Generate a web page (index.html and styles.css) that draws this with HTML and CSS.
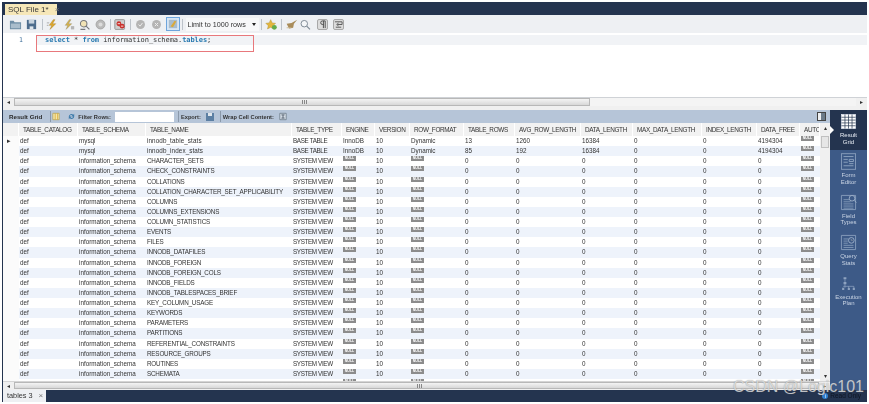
FILE: index.html
```html
<!DOCTYPE html>
<html lang="en">
<head>
<meta charset="utf-8">
<title>SQL File 1</title>
<link rel="stylesheet" href="styles.css">
</head>
<body>
<div class="app">
  <div class="tabbar"><div class="tab">SQL File 1* <span class="close">×</span></div></div>
  <div class="toolbar">
    <svg class="ic" viewBox="0 0 14 14"><path d="M1 3h4l1 1.500h7V12H1z" fill="#6f8ea6"/><path d="M2 6h10v5H2z" fill="#a9bdcc"/></svg>
    <svg class="ic" viewBox="0 0 14 14"><path d="M2 2h10v10H2z" fill="#4d6c8c"/><path d="M4 2h6v4H4z" fill="#c7d3de"/><path d="M5 9h4v3H5z" fill="#dfe6ec"/></svg>
    <i class="sep first"></i>
    <svg class="ic" viewBox="0 0 16 14"><path d="M9 1 4 8h3l-2 5 7-7H8l3-5z" fill="#e0a92c" stroke="#9c7a2a" stroke-width=".5"/><path d="M1 5h3M1 8h2" stroke="#888" stroke-width=".8"/></svg>
    <svg class="ic" viewBox="0 0 16 14"><path d="M9 1 4 8h3l-2 5 7-7H8l3-5z" fill="#d6b24c" stroke="#8f8a70" stroke-width=".5"/><path d="M11 9h4v4h-4z" fill="#b5b5b5"/></svg>
    <svg class="ic" viewBox="0 0 16 14"><circle cx="7" cy="6" r="4" fill="#f1e3b5" stroke="#77797c" stroke-width="1.300"/><path d="m10 9 4 4M3 13h6" stroke="#77797c" stroke-width="1.500"/></svg>
    <svg class="ic" viewBox="0 0 16 14"><circle cx="8" cy="7" r="5.500" fill="#b9b9b9" stroke="#a0a0a0"/><circle cx="8" cy="7" r="2.500" fill="#dcdcdc"/></svg>
    <i class="sep"></i>
    <svg class="ic" viewBox="0 0 16 14"><rect x="1" y="1" width="12" height="12" rx="1" fill="#cfcfcf" stroke="#888"/><circle cx="6" cy="6" r="3" fill="#c9302c"/><circle cx="10" cy="9" r="3" fill="#c9302c"/><path d="M4.500 6h3M8.500 9h3" stroke="#fff"/></svg>
    <i class="sep"></i>
    <svg class="ic" viewBox="0 0 16 14"><circle cx="8" cy="7" r="5.500" fill="#b4b4b4"/><path d="m5.500 7 2 2 3-4" stroke="#eee" stroke-width="1.200" fill="none"/></svg>
    <svg class="ic" viewBox="0 0 16 14"><circle cx="8" cy="7" r="5.500" fill="#b4b4b4"/><path d="m6 5 4 4m0-4-4 4" stroke="#eee" stroke-width="1.200"/></svg>
    <span class="toggle"><svg viewBox="0 0 12 12"><path d="M1 1h10v10H1z" fill="#a9bccd"/><path d="M3 9l5-7 2 1-4 7z" fill="#d9a93a"/></svg></span>
    <i class="sep"></i>
    <span class="limit">Limit to 1000 rows<b></b></span>
    <i class="sep"></i>
    <svg class="ic" viewBox="0 0 16 14"><path d="m7 1 2 4 4 .500-3 3 1 4-4-2-4 2 1-4-3-3 4-.500z" fill="#e3b63d" stroke="#a98a36" stroke-width=".5"/><circle cx="11.500" cy="10.500" r="3" fill="#63ab4a"/></svg>
    <i class="sep"></i>
    <svg class="ic tight" viewBox="0 0 16 14"><path d="M15 1 8 5 2 6l3 6 5-1 1-5z" fill="#a98c5a"/><path d="M2 11h6" stroke="#c9b48a"/></svg>
    <svg class="ic" viewBox="0 0 16 14"><circle cx="6.500" cy="6" r="4" fill="#f4f6f8" stroke="#7e8a95" stroke-width="1.200"/><path d="m9.500 9 4 4" stroke="#7e8a95" stroke-width="1.500"/></svg>
    <span class="keybtn"><svg viewBox="0 0 10 10"><path d="M6 1v8M8 1v8M8 1H5a2 2 0 0 0 0 4h1" stroke="#444" stroke-width="1" fill="none"/></svg></span>
    <span class="keybtn"><svg viewBox="0 0 10 10"><path d="M1 2h8v3H4M5 3.500 3 5l2 1.500M2 8h6" stroke="#444" stroke-width=".9" fill="none"/></svg></span>
  </div>
  <div class="editor">
    <div class="gutter">1</div>
    <div class="code"><span class="kw">select</span> * <span class="kw">from</span> information_schema.<span class="kw">tables</span>;</div>
    <div class="redbox"></div>
  </div>
  <div class="hscroll top"><span class="arrow">◂</span><span class="thumb short"></span><span class="track"></span><span class="arrow">▸</span></div>
  <div class="results">
    <div class="main">
      <div class="rtools">
        <b class="rlabel">Result Grid</b>
        <i class="sep dark"></i>
        <svg class="ric grid-ic" viewBox="0 0 10 10"><path d="M1 1h8v8H1z" fill="#f4e6a8" stroke="#b9a65a"/><path d="M4 1v8M7 1v8" stroke="#d9a93a"/></svg>
        <svg class="ric sp" viewBox="0 0 10 10"><path d="M2 5a3 3 0 0 1 5-2l1-1v3H5l1-1a2 2 0 0 0-3 1zM8 5a3 3 0 0 1-5 2L2 8V5h3L4 6a2 2 0 0 0 3-1z" fill="#3f7cab"/></svg>
        <span class="rtext">Filter Rows:</span>
        <span class="filter"></span>
        <i class="sep dark"></i>
        <span class="rtext">Export:</span>
        <svg class="ric exp" viewBox="0 0 10 10"><path d="M1 1h8v8H1z" fill="#5c7fa3"/><path d="M3 1h4v3H3z" fill="#dfe6ec"/></svg>
        <i class="sep dark"></i>
        <span class="rtext">Wrap Cell Content:</span>
        <svg class="ric sp2" viewBox="0 0 10 10"><path d="M1 1h8v8H1z" fill="#d5dde6" stroke="#6b7a88"/><path d="M3 3h4M5 3v4M3 7h4" stroke="#44525f"/></svg>
        <span class="panel"><i></i></span>
      </div>
      <div class="gridwrap">
        <div class="grid">
          <div class="row head"><span></span><span>TABLE_CATALOG</span><span>TABLE_SCHEMA</span><span>TABLE_NAME</span><span>TABLE_TYPE</span><span>ENGINE</span><span>VERSION</span><span>ROW_FORMAT</span><span>TABLE_ROWS</span><span>AVG_ROW_LENGTH</span><span>DATA_LENGTH</span><span>MAX_DATA_LENGTH</span><span>INDEX_LENGTH</span><span>DATA_FREE</span><span>AUTO_INCREMENT</span></div>
          <div class="row"><span class="mark">▸</span><span>def</span><span>mysql</span><span class="lower">innodb_table_stats</span><span>BASE TABLE</span><span>InnoDB</span><span>10</span><span>Dynamic</span><span>13</span><span>1260</span><span>16384</span><span>0</span><span>0</span><span>4194304</span><span><em>NULL</em></span></div>
          <div class="row"><span></span><span>def</span><span>mysql</span><span class="lower">innodb_index_stats</span><span>BASE TABLE</span><span>InnoDB</span><span>10</span><span>Dynamic</span><span>85</span><span>192</span><span>16384</span><span>0</span><span>0</span><span>4194304</span><span><em>NULL</em></span></div>
          <div class="row"><span></span><span>def</span><span>information_schema</span><span>CHARACTER_SETS</span><span>SYSTEM VIEW</span><span><em>NULL</em></span><span>10</span><span><em>NULL</em></span><span>0</span><span>0</span><span>0</span><span>0</span><span>0</span><span>0</span><span><em>NULL</em></span></div>
          <div class="row"><span></span><span>def</span><span>information_schema</span><span>CHECK_CONSTRAINTS</span><span>SYSTEM VIEW</span><span><em>NULL</em></span><span>10</span><span><em>NULL</em></span><span>0</span><span>0</span><span>0</span><span>0</span><span>0</span><span>0</span><span><em>NULL</em></span></div>
          <div class="row"><span></span><span>def</span><span>information_schema</span><span>COLLATIONS</span><span>SYSTEM VIEW</span><span><em>NULL</em></span><span>10</span><span><em>NULL</em></span><span>0</span><span>0</span><span>0</span><span>0</span><span>0</span><span>0</span><span><em>NULL</em></span></div>
          <div class="row"><span></span><span>def</span><span>information_schema</span><span>COLLATION_CHARACTER_SET_APPLICABILITY</span><span>SYSTEM VIEW</span><span><em>NULL</em></span><span>10</span><span><em>NULL</em></span><span>0</span><span>0</span><span>0</span><span>0</span><span>0</span><span>0</span><span><em>NULL</em></span></div>
          <div class="row"><span></span><span>def</span><span>information_schema</span><span>COLUMNS</span><span>SYSTEM VIEW</span><span><em>NULL</em></span><span>10</span><span><em>NULL</em></span><span>0</span><span>0</span><span>0</span><span>0</span><span>0</span><span>0</span><span><em>NULL</em></span></div>
          <div class="row"><span></span><span>def</span><span>information_schema</span><span>COLUMNS_EXTENSIONS</span><span>SYSTEM VIEW</span><span><em>NULL</em></span><span>10</span><span><em>NULL</em></span><span>0</span><span>0</span><span>0</span><span>0</span><span>0</span><span>0</span><span><em>NULL</em></span></div>
          <div class="row"><span></span><span>def</span><span>information_schema</span><span>COLUMN_STATISTICS</span><span>SYSTEM VIEW</span><span><em>NULL</em></span><span>10</span><span><em>NULL</em></span><span>0</span><span>0</span><span>0</span><span>0</span><span>0</span><span>0</span><span><em>NULL</em></span></div>
          <div class="row"><span></span><span>def</span><span>information_schema</span><span>EVENTS</span><span>SYSTEM VIEW</span><span><em>NULL</em></span><span>10</span><span><em>NULL</em></span><span>0</span><span>0</span><span>0</span><span>0</span><span>0</span><span>0</span><span><em>NULL</em></span></div>
          <div class="row"><span></span><span>def</span><span>information_schema</span><span>FILES</span><span>SYSTEM VIEW</span><span><em>NULL</em></span><span>10</span><span><em>NULL</em></span><span>0</span><span>0</span><span>0</span><span>0</span><span>0</span><span>0</span><span><em>NULL</em></span></div>
          <div class="row"><span></span><span>def</span><span>information_schema</span><span>INNODB_DATAFILES</span><span>SYSTEM VIEW</span><span><em>NULL</em></span><span>10</span><span><em>NULL</em></span><span>0</span><span>0</span><span>0</span><span>0</span><span>0</span><span>0</span><span><em>NULL</em></span></div>
          <div class="row"><span></span><span>def</span><span>information_schema</span><span>INNODB_FOREIGN</span><span>SYSTEM VIEW</span><span><em>NULL</em></span><span>10</span><span><em>NULL</em></span><span>0</span><span>0</span><span>0</span><span>0</span><span>0</span><span>0</span><span><em>NULL</em></span></div>
          <div class="row"><span></span><span>def</span><span>information_schema</span><span>INNODB_FOREIGN_COLS</span><span>SYSTEM VIEW</span><span><em>NULL</em></span><span>10</span><span><em>NULL</em></span><span>0</span><span>0</span><span>0</span><span>0</span><span>0</span><span>0</span><span><em>NULL</em></span></div>
          <div class="row"><span></span><span>def</span><span>information_schema</span><span>INNODB_FIELDS</span><span>SYSTEM VIEW</span><span><em>NULL</em></span><span>10</span><span><em>NULL</em></span><span>0</span><span>0</span><span>0</span><span>0</span><span>0</span><span>0</span><span><em>NULL</em></span></div>
          <div class="row"><span></span><span>def</span><span>information_schema</span><span>INNODB_TABLESPACES_BRIEF</span><span>SYSTEM VIEW</span><span><em>NULL</em></span><span>10</span><span><em>NULL</em></span><span>0</span><span>0</span><span>0</span><span>0</span><span>0</span><span>0</span><span><em>NULL</em></span></div>
          <div class="row"><span></span><span>def</span><span>information_schema</span><span>KEY_COLUMN_USAGE</span><span>SYSTEM VIEW</span><span><em>NULL</em></span><span>10</span><span><em>NULL</em></span><span>0</span><span>0</span><span>0</span><span>0</span><span>0</span><span>0</span><span><em>NULL</em></span></div>
          <div class="row"><span></span><span>def</span><span>information_schema</span><span>KEYWORDS</span><span>SYSTEM VIEW</span><span><em>NULL</em></span><span>10</span><span><em>NULL</em></span><span>0</span><span>0</span><span>0</span><span>0</span><span>0</span><span>0</span><span><em>NULL</em></span></div>
          <div class="row"><span></span><span>def</span><span>information_schema</span><span>PARAMETERS</span><span>SYSTEM VIEW</span><span><em>NULL</em></span><span>10</span><span><em>NULL</em></span><span>0</span><span>0</span><span>0</span><span>0</span><span>0</span><span>0</span><span><em>NULL</em></span></div>
          <div class="row"><span></span><span>def</span><span>information_schema</span><span>PARTITIONS</span><span>SYSTEM VIEW</span><span><em>NULL</em></span><span>10</span><span><em>NULL</em></span><span>0</span><span>0</span><span>0</span><span>0</span><span>0</span><span>0</span><span><em>NULL</em></span></div>
          <div class="row"><span></span><span>def</span><span>information_schema</span><span>REFERENTIAL_CONSTRAINTS</span><span>SYSTEM VIEW</span><span><em>NULL</em></span><span>10</span><span><em>NULL</em></span><span>0</span><span>0</span><span>0</span><span>0</span><span>0</span><span>0</span><span><em>NULL</em></span></div>
          <div class="row"><span></span><span>def</span><span>information_schema</span><span>RESOURCE_GROUPS</span><span>SYSTEM VIEW</span><span><em>NULL</em></span><span>10</span><span><em>NULL</em></span><span>0</span><span>0</span><span>0</span><span>0</span><span>0</span><span>0</span><span><em>NULL</em></span></div>
          <div class="row"><span></span><span>def</span><span>information_schema</span><span>ROUTINES</span><span>SYSTEM VIEW</span><span><em>NULL</em></span><span>10</span><span><em>NULL</em></span><span>0</span><span>0</span><span>0</span><span>0</span><span>0</span><span>0</span><span><em>NULL</em></span></div>
          <div class="row"><span></span><span>def</span><span>information_schema</span><span>SCHEMATA</span><span>SYSTEM VIEW</span><span><em>NULL</em></span><span>10</span><span><em>NULL</em></span><span>0</span><span>0</span><span>0</span><span>0</span><span>0</span><span>0</span><span><em>NULL</em></span></div>
          <div class="row peek"><span></span><span></span><span></span><span></span><span></span><span><em>NULL</em></span><span></span><span><em>NULL</em></span><span></span><span></span><span></span><span></span><span></span><span></span><span><em>NULL</em></span></div>
        </div>
        <div class="vscroll"><span class="up">▴</span><span class="vthumb"></span><span class="down">▾</span></div>
      </div>
      <div class="hscroll bottom"><span class="arrow">◂</span><span class="thumb"></span><span class="arrow">▸</span></div>
    </div>
    <div class="side">
      <div class="sbtn on">
        <svg viewBox="0 0 24 24"><rect x="2" y="2" width="20" height="20" fill="#fff" stroke="#dfe5ee"/><path d="M2 6h20M2 10h20M2 14h20M2 18h20M7 2v20M12 2v20M17 2v20" stroke="#25364f"/></svg>
        <span>Result<br>Grid</span>
      </div>
      <div class="sbtn">
        <svg viewBox="0 0 24 24"><rect x="2" y="1" width="20" height="22" fill="none" stroke="#8ea3c0" stroke-width="1.200"/><path d="M5 5h14M5 9h6M13 9h6v3h-6zM5 13h6M13 15h6M5 18h14" stroke="#8ea3c0" stroke-width="1.300" fill="none"/></svg>
        <span>Form<br>Editor</span>
      </div>
      <div class="sbtn">
        <svg viewBox="0 0 24 24"><path d="M2 2h20v20H2z" fill="none" stroke="#8ea3c0" stroke-width="1.200"/><path d="M5 8h8M5 11h10M5 14h14M5 17h14M5 20h14" stroke="#8ea3c0" stroke-width="1.100"/><circle cx="17" cy="6" r="4" fill="#3d5a87" stroke="#a4b6ce" stroke-width="1.200"/><path d="m20 9 3 3" stroke="#a4b6ce" stroke-width="1.300"/></svg>
        <span>Field<br>Types</span>
      </div>
      <div class="sbtn">
        <svg viewBox="0 0 24 24"><path d="M2 2h20v20H2z" fill="none" stroke="#8ea3c0" stroke-width="1.200"/><path d="M5 7h7M5 10h6M5 13h6M5 16h14M5 19h14" stroke="#8ea3c0" stroke-width="1.100"/><circle cx="16" cy="9" r="4" fill="#3d5a87" stroke="#a4b6ce" stroke-width="1.200"/><path d="M16 7v2h2" stroke="#a4b6ce"/></svg>
        <span>Query<br>Stats</span>
      </div>
      <div class="sbtn">
        <svg viewBox="0 0 24 24"><path d="M5 3h4v3H5zM5 10h4v3H5zM3 18h3v3H3zM11 18h3v3h-3zM18 18h3v3h-3z" fill="#8ea3c0"/><path d="M7 6v12M4.500 16h15v2M12 16v2" stroke="#8ea3c0" fill="none"/></svg>
        <span>Execution<br>Plan</span>
      </div>
    </div>
  </div>
  <div class="statusbar">
    <div class="rtab">tables 3 <span class="close">×</span></div>
    <div class="readonly"><span class="info">i</span> Read Only</div>
  </div>
</div>
<div class="watermark">CSDN @Logic101</div>
</body>
</html>
```

FILE: styles.css
```css
* { box-sizing: border-box; }
html, body { margin: 0; height: 100%; background: #fff; overflow: hidden; }
body { font-family: "Liberation Sans", Arial, sans-serif; color: #2b2b2b; position: relative; }

.app {
  width: 865px; height: 400px; margin: 2px 0 0 2px;
  display: flex; flex-direction: column;
  background: #24344f; padding-left: 1px;
  filter: blur(.35px);
}

.tabbar { height: 13px; flex: none; display: flex; align-items: flex-end; padding-left: 2px; }
.tab {
  width: 52px; height: 11px; background: #f6e7b8; font-size: 8px; line-height: 11px;
  padding-left: 3px; color: #3a3a3a; white-space: nowrap;
}
.close { color: #777; font-size: 8px; margin-left: 4px; }

.toolbar {
  height: 18px; flex: none; background: #eef0f3; display: flex; align-items: center; padding-left: 5.5px;
}
.ic { width: 13px; height: 13px; margin-right: 3px; flex: none; }
.ic.tight { margin-right: 1px; }
.sep { width: 1px; height: 11px; background: #bcc2c9; margin: 0 3px 0 0; flex: none; }
.sep.first { margin-left: 1px; }
.toggle {
  width: 14px; height: 14px; border: 1px solid #6ea5dc; background: #d7e6f5; padding: 1px; margin-right: 2px; display: flex; flex: none;
}
.toggle svg { width: 100%; height: 100%; }
.limit {
  width: 73px; height: 13px; margin: 0 2px 0 0; background: #f7f8f9; font-size: 7.2px; line-height: 13px; padding: 0 3px 0 2px;
  display: flex; align-items: center; justify-content: space-between; color: #333; white-space: nowrap; flex: none;
}
.limit b { border: 2.5px solid transparent; border-top: 3px solid #222; border-bottom: 0; }
.keybtn {
  width: 11px; height: 11px; border: 1px solid #a8a8a8; background: #dcdcdc; border-radius: 2px; margin: 0 3px 0 2px; display: flex; flex: none;
}
.keybtn svg { width: 100%; height: 100%; }

.editor { height: 64px; flex: none; background: #fff; display: flex; position: relative; padding-top: 2px; }
.gutter { width: 33px; flex: none; height: 10px; font: 6.5px/10px "DejaVu Sans Mono", monospace; color: #3f6f9a; text-align: right; padding-right: 13px; }
.code {
  flex: 1; height: 10px; background: #f1f3f6; font: 7px/10px "DejaVu Sans Mono", monospace; color: #333; white-space: pre; padding-left: 9px; letter-spacing: -.06px;
}
.kw { color: #2a7ab0; font-weight: bold; }
.redbox { position: absolute; left: 33px; top: 2px; width: 218px; height: 17px; border: 1px solid #e8787c; }

.hscroll { flex: none; background: #f0f0f0; display: flex; position: relative; }
.hscroll.top { height: 13px; border-top: 1px solid #cfd2d6; align-items: flex-start; padding-top: 0; }
.arrow { font-size: 6px; line-height: 8px; color: #333; width: 11px; text-align: center; flex: none; }
.thumb {
  flex: 1; height: 8px; border: 1px solid #b8b8b8; position: relative;
  background: linear-gradient(#f4f4f4, #d8d8d8);
}
.thumb::after {
  content: ""; position: absolute; left: 50%; top: 1px; width: 5px; height: 4px;
  background: repeating-linear-gradient(90deg, #888 0 1px, transparent 1px 2px);
}
.thumb.short { flex: none; width: 576px; }
.track { flex: 1; height: 8px; background: #f4f4f4; }

.results { flex: 1; display: flex; min-height: 0; }
.main { width: 827px; flex: none; display: flex; flex-direction: column; min-width: 0; background: #fff; }
.rtools { height: 13px; flex: none; background: #b6c5d8; display: flex; align-items: center; padding-left: 6px; font-size: 6px; color: #2a2a2a; }
.rlabel { font-size: 6.2px; white-space: nowrap; margin-right: 4px; }
.rtext { font-weight: bold; white-space: nowrap; font-size: 5.7px; color: #333; margin-left: 2px; }
.sep.dark { background: #8b99aa; margin: 0 0 0 4px; }
.ric { width: 8px; height: 9px; flex: none; }
.ric.grid-ic { margin-left: 1px; }
.ric.sp { margin: 0 0 0 7px; width: 9px; }
.ric.exp { margin: 0 1px 0 4px; width: 10px; height: 10px; }
.ric.sp2 { margin-left: 5px; }
.filter { width: 59px; height: 10px; background: #fff; margin: 0 0 0 4px; flex: none; }
.panel { margin-left: auto; margin-right: 4px; width: 9px; height: 9px; border: 1px solid #444; background: #eef0f2; display: flex; justify-content: flex-end; }
.panel i { width: 4px; background: #6b7a88; }

.gridwrap { height: 258px; flex: none; display: flex; background: #fff; overflow: hidden; }
.grid { width: 817px; flex: none; overflow: hidden; }
.row {
  display: grid;
  grid-template-columns: 16px 59px 68px 146px 50px 33px 35px 54px 51px 66px 52px 69px 55px 43px 20px;
  height: 10.13px; font-size: 6.3px; line-height: 10px; color: #333; white-space: nowrap;
}
.row:nth-child(odd) { background: #eef3fb; }
.row span { padding-left: 1px; overflow: hidden; }
.row span:nth-child(4) { letter-spacing: -.19px; }
.row span.lower { letter-spacing: .1px; }
.row span:nth-child(5) { letter-spacing: -.36px; }
.row > span:first-child { background: #fbfbfb; }
.row .mark { font-size: 7px; color: #333; padding-left: 4px; }
.row.head { height: 13px; background: #f2f2f2; line-height: 13px; color: #333; font-size: 6.4px; }
.row.head span { padding-left: 4px; border-right: 1px solid #fff; letter-spacing: -.33px; background: #f2f2f2; }
.row em {
  display: block; width: 13px; height: 5px; margin-top: 0; background: #8c8c8c; color: #fff;
  font: bold 3.5px/5px "Liberation Sans", sans-serif; text-align: center; font-style: normal; letter-spacing: 0;
}
.vscroll { flex: 1; background: #f0f0f0; display: flex; flex-direction: column; align-items: center; font-size: 6px; color: #333; }
.up { height: 13px; line-height: 10px; }
.vthumb { width: 8px; height: 12px; background: #e6e6e6; border: 1px solid #c0c0c0; }
.down { margin-top: auto; height: 10px; line-height: 10px; }
.hscroll.bottom { height: 9px; border-top: 1px solid #d5d5d5; }
.hscroll.bottom .thumb { height: 7px; }

.side { flex: 1; background: #3d5a87; display: flex; flex-direction: column; }
.sbtn { height: 40.5px; flex: none; display: flex; flex-direction: column; align-items: center; color: #c9d4e4; font-size: 6px; line-height: 6.8px; text-align: center; padding-top: 2px; }
.sbtn svg { width: 17px; height: 19px; flex: none; margin-bottom: 1px; }
.sbtn.on { height: 40px; background: #24344f; color: #e9eef5; position: relative; }
.sbtn.on::before { content: ""; position: absolute; left: 0; top: 16px; border: 4px solid transparent; border-left: 4px solid #fff; }

.statusbar { height: 12px; flex: none; display: flex; justify-content: space-between; align-items: stretch; }
.rtab { width: 43px; background: #eef0f3; font-size: 7.3px; line-height: 12px; padding-left: 4px; color: #333; white-space: nowrap; }
.readonly { font-size: 6.5px; line-height: 12px; color: #0e1522; padding-right: 6px; }
.info { display: inline-block; width: 6px; height: 6px; border-radius: 50%; background: #2f7fd0; color: #fff; font-size: 5px; line-height: 6px; text-align: center; }

.watermark {
  position: absolute; left: 733px; top: 377px; font: 16px/20px "Liberation Sans", sans-serif; color: rgba(235, 235, 235, .75);
  text-shadow: 0 0 1px rgba(90, 90, 90, .6); white-space: nowrap;
}
```
